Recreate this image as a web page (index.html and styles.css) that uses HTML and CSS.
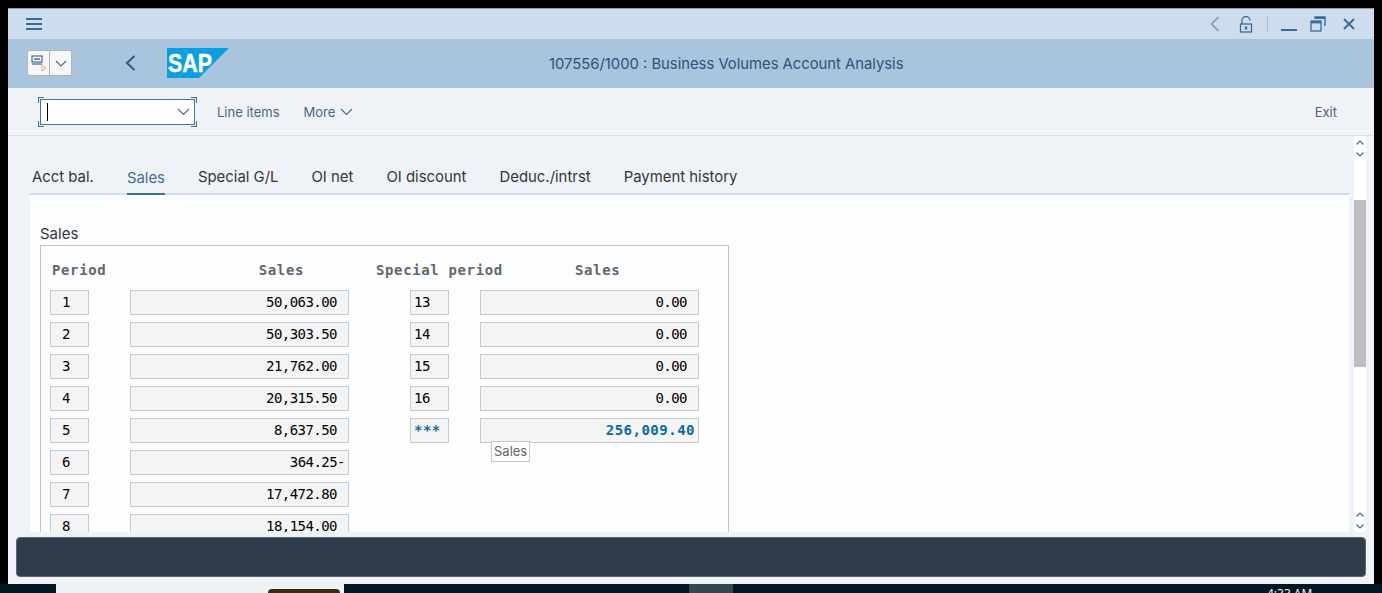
FILE: index.html
```html
<!DOCTYPE html>
<html lang="en">
  <head>
    <meta charset="UTF-8" />
    <title>Business Volumes Account Analysis</title>
    <link rel="stylesheet" href="styles.css">
  </head>
  <body>
    <div class="window">
      <div class="topbar">
        <svg class="menu-icon" width="18" height="14" viewBox="0 0 18 14"><path d="M1 2h16M1 7h16M1 12h16" stroke="#3d6b99" stroke-width="2" fill="none"/></svg>
        <div class="win-buttons">
          <svg class="icon-back" width="10" height="16" viewBox="0 0 10 16"><path d="M8.5 1L1.5 8l7 7" stroke="#6f93b8" stroke-width="1.4" fill="none"/></svg>
          <svg class="icon-lock" width="14" height="17" viewBox="0 0 14 17"><path d="M3 8V4.5a4 4 0 0 1 8 0" stroke="#3d6b99" stroke-width="1.3" fill="none"/><rect x="1.5" y="8" width="11" height="8" stroke="#3d6b99" stroke-width="1.3" fill="none"/><path d="M7 10.5v3" stroke="#3d6b99" stroke-width="2.4"/></svg>
          <span class="win-sep"></span>
          <svg class="icon-min" width="16" height="16" viewBox="0 0 16 16"><path d="M0 14h16" stroke="#3d6b99" stroke-width="2"/></svg>
          <svg class="icon-max" width="16" height="16" viewBox="0 0 16 16"><path d="M5 3V1h10v8h-1" stroke="#3d6b99" stroke-width="1.4" fill="none"/><path d="M5 1h10v2H5z" fill="#3d6b99"/><rect x="1" y="5" width="10" height="10" stroke="#3d6b99" stroke-width="1.3" fill="none"/><path d="M1 5h10v2.4H1z" fill="#3d6b99"/></svg>
          <svg class="icon-close" width="12" height="12" viewBox="0 0 12 12"><path d="M1 1l10 10M11 1L1 11" stroke="#3d6b99" stroke-width="2" fill="none"/></svg>
        </div>
      </div>

      <div class="titlebar">
        <div class="cmd-button">
          <span class="cmd-left">
            <svg width="16" height="17" viewBox="0 0 16 17"><rect x="1" y="1" width="10" height="6" stroke="#3d6b99" stroke-width="1.2" fill="#fff"/><path d="M3 4h6" stroke="#3d6b99" stroke-width="1.5"/><path d="M1 9h10" stroke="#3d6b99" stroke-width="1.2"/><path d="M11 10l4 3-4 3z" stroke="#e8a878" stroke-width="1" fill="none"/></svg>
          </span>
          <span class="cmd-right">
            <svg width="12" height="7" viewBox="0 0 12 7"><path d="M1 1l5 5 5-5" stroke="#3d6b99" stroke-width="1.1" fill="none"/></svg>
          </span>
        </div>
        <svg class="back-arrow" width="11" height="16" viewBox="0 0 11 16"><path d="M9.5 1L2 8l7.5 7" stroke="#2f5a85" stroke-width="2" fill="none"/></svg>
        <svg class="sap-logo" width="62" height="30" viewBox="0 0 62 30">
          <path d="M0 0h62L32 30H0z" fill="#0a9fe0"/>
          <text x="1" y="23.5" class="sap-text" textLength="44" lengthAdjust="spacingAndGlyphs">SAP</text>
        </svg>
        <div class="title">107556/1000 : Business Volumes Account Analysis</div>
      </div>

      <div class="toolbar">
        <div class="cmd-field">
          <span class="caret"></span>
          <svg width="13" height="8" viewBox="0 0 13 8"><path d="M1 1l5.5 5.5L12 1" stroke="#3d6b99" stroke-width="1.1" fill="none"/></svg>
        </div>
        <span class="tool-link line-items">Line items</span>
        <span class="tool-link more">More
          <svg width="13" height="8" viewBox="0 0 13 8"><path d="M1 1l5.5 5.5L12 1" stroke="#3d6b99" stroke-width="1.1" fill="none"/></svg>
        </span>
        <span class="tool-link exit">Exit</span>
      </div>

      <div class="main">
        <div class="content">
          <div class="tabs">
            <span class="tab">Acct bal.</span>
            <span class="tab active">Sales</span>
            <span class="tab">Special G/L</span>
            <span class="tab">OI net</span>
            <span class="tab">OI discount</span>
            <span class="tab">Deduc./intrst</span>
            <span class="tab">Payment history</span>
          </div>
          <div class="panel">
            <div class="group-title">Sales</div>
            <div class="group">
              <div class="grid">
                <div class="head head-period">Period</div>
                <div class="head head-sales">Sales</div>
                <div class="head head-special">Special period</div>
                <div class="head head-sales2">Sales</div>

                <div class="cell period">1</div><div class="cell amount">50,063.00</div>
                <div class="cell special">13</div><div class="cell amount">0.00</div>

                <div class="cell period">2</div><div class="cell amount">50,303.50</div>
                <div class="cell special">14</div><div class="cell amount">0.00</div>

                <div class="cell period">3</div><div class="cell amount">21,762.00</div>
                <div class="cell special">15</div><div class="cell amount">0.00</div>

                <div class="cell period">4</div><div class="cell amount">20,315.50</div>
                <div class="cell special">16</div><div class="cell amount">0.00</div>

                <div class="cell period">5</div><div class="cell amount">8,637.50</div>
                <div class="cell special total">***</div>
                <div class="cell amount total">256,009.40<span class="tooltip">Sales</span></div>

                <div class="cell period">6</div><div class="cell amount neg">364.25-</div>

                <div class="cell period">7</div><div class="cell amount">17,472.80</div>

                <div class="cell period">8</div><div class="cell amount">18,154.00</div>
              </div>
            </div>
          </div>
        </div>
        <div class="scrollbar">
          <div class="arrows arrows-top">
            <svg width="8" height="5" viewBox="0 0 8 5"><path d="M.5 4.500L4 1l3.500 3.500" stroke="#3d6b99" stroke-width="1.2" fill="none"/></svg>
            <svg width="8" height="5" viewBox="0 0 8 5"><path d="M.5 .5L4 4 7.500 .5" stroke="#3d6b99" stroke-width="1.2" fill="none"/></svg>
          </div>
          <div class="track"><div class="thumb"></div></div>
          <div class="arrows arrows-bottom">
            <svg width="8" height="5" viewBox="0 0 8 5"><path d="M.5 4.500L4 1l3.500 3.500" stroke="#3d6b99" stroke-width="1.2" fill="none"/></svg>
            <svg width="8" height="5" viewBox="0 0 8 5"><path d="M.5 .5L4 4 7.500 .5" stroke="#3d6b99" stroke-width="1.2" fill="none"/></svg>
          </div>
        </div>
      </div>

      <div class="statusbar"></div>
    </div>

    <div class="desktop">
      <div class="desk-app"><span class="desk-pill"></span></div>
      <div class="desk-task"></div>
      <div class="desk-clock">4:33 AM</div>
    </div>
  </body>
</html>
```

FILE: styles.css
```css
html, body {
  margin: 0;
  height: 593px;
  overflow: hidden;
  background-color: #000;
  font-family: Inter, "Open Sans", Arial, sans-serif;
}

.window {
  margin: 8px 8px 0 8px;
  width: 1366px;
  height: 576px;
  background-color: #eff3f8;
  display: flex;
  flex-direction: column;
  box-sizing: border-box;
}

/* top strip */
.topbar {
  height: 32px;
  box-sizing: border-box;
  background-color: #cddded;
  border-top: 1px solid #9a9a9a;
  border-bottom: 1px solid #b4c2d0;
  display: flex;
  align-items: center;
  padding-left: 17px;
  justify-content: space-between;
}

.win-buttons {
  display: flex;
  align-items: center;
  margin-right: 19px;
}

.icon-lock { margin-left: 19px; }
.win-sep {
  width: 1px;
  height: 16px;
  background-color: #b0bfce;
  margin-left: 14px;
}
.icon-min { margin-left: 13px; }
.icon-max { margin-left: 13px; }
.icon-close { margin-left: 17px; }

/* title row */
.titlebar {
  height: 48px;
  background-color: #a9c4dd;
  position: relative;
  display: flex;
  align-items: center;
  padding-left: 19px;
}

.cmd-button {
  width: 45px;
  height: 26px;
  box-sizing: border-box;
  margin-top: -2px;
  background-color: #f7f7f7;
  border: 1px solid #b3b3b3;
  border-radius: 2px;
  display: flex;
}

.cmd-left {
  width: 21px;
  border-right: 1px solid #b3b3b3;
  display: flex;
  align-items: center;
  justify-content: center;
}

.cmd-right {
  flex: 1;
  display: flex;
  align-items: center;
  justify-content: center;
}

.back-arrow { margin-left: 53px; margin-top: -2px; }
.sap-logo { margin-left: 31px; margin-top: -2px; }

.sap-text {
  font-family: "Liberation Sans", Arial, sans-serif;
  font-weight: bold;
  font-size: 25px;
  fill: #fff;
  stroke: #fff;
  stroke-width: 0.4px;
}

.title {
  position: absolute;
  left: 541px;
  top: 14px;
  font-size: 14.8px;
  line-height: 20px;
  color: #2c5378;
  white-space: nowrap;
}

/* toolbar */
.toolbar {
  height: 48px;
  box-sizing: border-box;
  border-bottom: 1px solid #d7e1eb;
  display: flex;
  align-items: center;
  padding-left: 32px;
  padding-top: 1px;
}

.cmd-field {
  position: relative;
  width: 155px;
  height: 26px;
  box-sizing: border-box;
  background-color: #fff;
  border: 1px solid #3f74a5;
  display: flex;
  align-items: center;
  justify-content: space-between;
  padding: 0 4px 0 6px;
}

.cmd-field::before {
  content: "";
  position: absolute;
  left: -3px;
  right: -3px;
  top: -3px;
  bottom: -3px;
  pointer-events: none;
  background:
    linear-gradient(#3f74a5, #3f74a5) left top / 6px 1px no-repeat,
    linear-gradient(#3f74a5, #3f74a5) right top / 6px 1px no-repeat,
    linear-gradient(#3f74a5, #3f74a5) left bottom / 6px 1px no-repeat,
    linear-gradient(#3f74a5, #3f74a5) right bottom / 6px 1px no-repeat,
    linear-gradient(#3f74a5, #3f74a5) left top / 1px 6px no-repeat,
    linear-gradient(#3f74a5, #3f74a5) right top / 1px 6px no-repeat,
    linear-gradient(#3f74a5, #3f74a5) left bottom / 1px 6px no-repeat,
    linear-gradient(#3f74a5, #3f74a5) right bottom / 1px 6px no-repeat;
}

.caret {
  width: 1px;
  height: 18px;
  background-color: #000;
}

.tool-link {
  font-size: 13px;
  color: #4a6683;
}

.line-items { margin-left: 22px; }

.more {
  margin-left: 24px;
  display: flex;
  align-items: center;
  gap: 5px;
}

.exit {
  margin-left: auto;
  margin-right: 37px;
}

/* content area */
.main {
  height: 396px;
  display: flex;
  overflow: hidden;
}

.content {
  margin-left: 22px;
  width: 1319px;
  overflow: hidden;
}

.tabs {
  height: 59px;
  box-sizing: border-box;
  border-bottom: 2px solid #d1dfec;
  display: flex;
  align-items: flex-end;
  gap: 33px;
  padding-left: 2px;
}

.tab {
  font-size: 14.9px;
  line-height: 20px;
  color: #32363a;
  padding-bottom: 6px;
}

.tab.active {
  color: #3f6c98;
  padding-bottom: 5px;
  margin-bottom: -2px;
  border-bottom: 2px solid #3f6c98;
}

.panel {
  background-color: #fcfdff;
  padding: 29px 0 0 10px;
  height: 337px;
}

.group-title {
  font-size: 15px;
  line-height: 20px;
  color: #32363a;
  height: 21px;
}

.group {
  width: 689px;
  height: 340px;
  box-sizing: border-box;
  border: 1px solid #c4c4c4;
  padding: 12px 0 0 9px;
}

.grid {
  display: grid;
  grid-template-columns: 39px 41px 219px 61px 39px 31px 219px;
  grid-auto-rows: 25px;
  row-gap: 7px;
  font-family: "DejaVu Sans Mono", "Liberation Mono", monospace;
  font-size: 14px;
  letter-spacing: -0.55px;
}

.head {
  font-weight: bold;
  font-size: 14px;
  letter-spacing: 0.63px;
  line-height: 24px;
  color: #666;
  white-space: nowrap;
}

.head-period { grid-column: 1 / 3; padding-left: 2px; }
.head-sales { grid-column: 3; text-align: right; padding-right: 45px; }
.head-special { grid-column: 4 / 7; padding-left: 27px; }
.head-sales2 { grid-column: 7; padding-left: 95px; }

.cell {
  position: relative;
  box-sizing: border-box;
  height: 25px;
  line-height: 23px;
  background-color: #f4f4f4;
  border: 1px solid #c9c9c9;
  color: #000;
  white-space: nowrap;
}

.period { grid-column: 1; text-align: center; padding-right: 7px; }
.cell.amount { text-align: right; padding-right: 11px; }
.cell.amount.neg { padding-right: 3px; }
.special { grid-column: 5; padding-left: 3px; }
.special + .amount { grid-column: 7; }
.period + .amount { grid-column: 3; }

.cell.total {
  color: #0a6aa8;
  font-weight: bold;
  letter-spacing: 0.5px;
}

.cell.amount.total { padding-right: 3px; }

.tooltip {
  position: absolute;
  left: 10px;
  top: 22px;
  height: 21px;
  line-height: 19px;
  box-sizing: border-box;
  padding: 0 2px;
  background-color: #fff;
  border: 1px solid #c4c4c4;
  font-family: Inter, Arial, sans-serif;
  font-size: 13px;
  letter-spacing: 0;
  font-weight: normal;
  color: #666;
}

/* scrollbar */
.scrollbar {
  margin-left: 5px;
  width: 12px;
  background-color: #fff;
  display: flex;
  flex-direction: column;
}

.arrows {
  height: 32px;
  box-sizing: border-box;
  display: flex;
  flex-direction: column;
  align-items: center;
  gap: 7px;
}

.arrows-top { padding-top: 4px; }
.arrows-bottom { padding-top: 12px; }

.track {
  flex: 1;
  padding-top: 32px;
}

.thumb {
  height: 167px;
  background-color: #bfbfbf;
}

/* message bar */
.statusbar {
  margin: 5px 8px 0 8px;
  height: 40px;
  background-color: #2f3c4a;
  border: 1px solid #5b6672;
  border-radius: 4px;
  box-sizing: border-box;
}

/* bit of desktop under the window */
.desktop {
  height: 9px;
  background-color: #001620;
  position: relative;
  overflow: hidden;
  display: flex;
}

.desk-app {
  margin-left: 56px;
  width: 288px;
  height: 9px;
  background-color: #eef2f6;
  position: relative;
}

.desk-pill {
  position: absolute;
  left: 212px;
  top: 5px;
  width: 72px;
  height: 10px;
  border-radius: 4px;
  background-color: #3b2a10;
}

.desk-task {
  margin-left: 345px;
  width: 44px;
  background-color: #34474f;
}

.desk-clock {
  position: absolute;
  left: 1267px;
  top: 3px;
  font-family: "Open Sans", Arial, sans-serif;
  font-size: 12px;
  line-height: 14px;
  color: #fff;
}
```
